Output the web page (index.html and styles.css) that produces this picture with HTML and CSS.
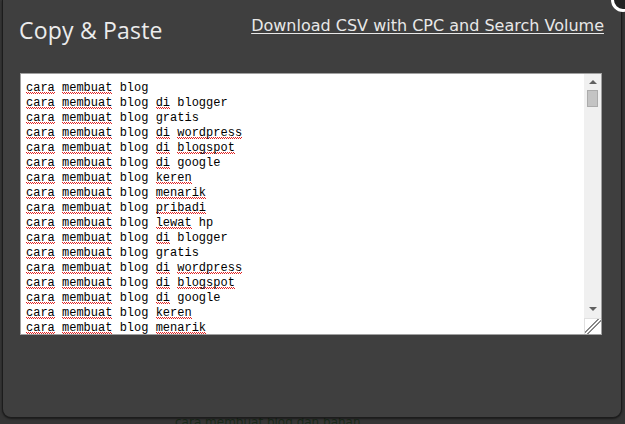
FILE: index.html
```html
<!DOCTYPE html>
<html lang="id">
<head>
    <meta charset="UTF-8">
    <title>Copy &amp; Paste</title>
    <link rel="stylesheet" href="styles.css">
</head>
<body>

    <div class="modal">
        <a class="btn-close" href="#"></a>
        <div class="modal-head">
            <h2>Copy &amp; Paste</h2>
            <a class="csv-link" href="#">Download CSV with CPC and Search Volume</a>
        </div>

        <div class="keyword-box">
            <div class="keyword-lines">
                <div><u>cara</u> <u>membuat</u> blog</div>
                <div><u>cara</u> <u>membuat</u> blog <u>di</u> blogger</div>
                <div><u>cara</u> <u>membuat</u> blog gratis</div>
                <div><u>cara</u> <u>membuat</u> blog <u>di</u> <u>wordpress</u></div>
                <div><u>cara</u> <u>membuat</u> blog <u>di</u> <u>blogspot</u></div>
                <div><u>cara</u> <u>membuat</u> blog <u>di</u> google</div>
                <div><u>cara</u> <u>membuat</u> blog <u>keren</u></div>
                <div><u>cara</u> <u>membuat</u> blog <u>menarik</u></div>
                <div><u>cara</u> <u>membuat</u> blog <u>pribadi</u></div>
                <div><u>cara</u> <u>membuat</u> blog <u>lewat</u> hp</div>
                <div><u>cara</u> <u>membuat</u> blog <u>di</u> blogger</div>
                <div><u>cara</u> <u>membuat</u> blog gratis</div>
                <div><u>cara</u> <u>membuat</u> blog <u>di</u> <u>wordpress</u></div>
                <div><u>cara</u> <u>membuat</u> blog <u>di</u> <u>blogspot</u></div>
                <div><u>cara</u> <u>membuat</u> blog <u>di</u> google</div>
                <div><u>cara</u> <u>membuat</u> blog <u>keren</u></div>
                <div><u>cara</u> <u>membuat</u> blog <u>menarik</u></div>
            </div>
            <div class="scrollbar">
                <span class="arrow-up"></span>
                <span class="thumb"></span>
                <span class="track"></span>
                <span class="arrow-down"></span>
                <span class="grip"></span>
            </div>
        </div>
    </div>

    <p class="behind">cara membuat blog dan bahan</p>

</body>
</html>
```

FILE: styles.css
```css
body {
    margin: 0;
    height: 424px;
    overflow: hidden;
    background-color: #353535;
    font-family: "DejaVu Sans", sans-serif;
}

.modal {
    position: relative;
    width: 618px;
    height: 417px;
    margin: 0 0 0 2px;
    background-color: #3f3f3f;
    border: 1px solid #1c1c1c;
    border-top: none;
    border-radius: 0 0 9px 9px;
    box-shadow: 0 1px 2px rgba(0,0,0,0.5);
}

.btn-close {
    position: absolute;
    top: -12px;
    right: -14px;
    width: 18px;
    height: 18px;
    border: 3px solid #fff;
    border-radius: 50%;
    background-color: #222;
}

.modal-head {
    display: flex;
    justify-content: space-between;
    align-items: flex-start;
    padding: 14px 17px 0 16px;
    height: 59px;
}

.modal-head h2 {
    margin: 0;
    font-family: "Open Sans", sans-serif;
    font-weight: normal;
    font-size: 23px;
    line-height: 32px;
    letter-spacing: 0.2px;
    color: #ececec;
}

.csv-link {
    margin-top: 1px;
    font-family: "DejaVu Sans", sans-serif;
    font-size: 16px;
    line-height: 22px;
    color: #e8e8e8;
    text-decoration: underline;
    text-underline-offset: 2px;
}

.keyword-box {
    display: flex;
    width: 580px;
    height: 260px;
    margin-left: 17px;
    background-color: #fff;
    border: 1px solid #a0a0a0;
    overflow: hidden;
}

.keyword-lines {
    flex: 1;
    padding: 7px 5px;
    font-family: "Liberation Mono", monospace;
    font-size: 12px;
    line-height: 15px;
    color: #000;
    white-space: nowrap;
    overflow: hidden;
}

/* spell-check squiggle */
.keyword-lines u {
    text-decoration: none;
    background-image: linear-gradient(90deg, #e02020 50%, transparent 50%), linear-gradient(90deg, transparent 50%, #e02020 50%);
    background-size: 2px 1px, 2px 1px;
    background-position: 0 calc(100% - 2px), 0 calc(100% - 1px);
    background-repeat: repeat-x;
}

.scrollbar {
    display: flex;
    flex-direction: column;
    align-items: center;
    width: 17px;
    background-color: #f0f0f0;
}

.arrow-up, .arrow-down {
    width: 0;
    height: 0;
    margin: 6px 0 4px;
    border-left: 4px solid transparent;
    border-right: 4px solid transparent;
}

.arrow-up {
    border-bottom: 4px solid #606060;
}

.arrow-down {
    border-top: 4px solid #606060;
}

.thumb {
    width: 11px;
    height: 17px;
    margin-top: 2px;
    background-color: #c4c4c4;
    border: 1px solid #ababab;
    box-sizing: border-box;
}

.track {
    flex: 1;
}

.grip {
    width: 17px;
    height: 16px;
    margin-top: 3px;
    background-color: #fff;
    border-top: 1px solid #e0e0e0;
    border-left: 1px solid #e0e0e0;
    box-sizing: border-box;
    background-image: linear-gradient(135deg, transparent 9px, #888 9px, #888 10px, transparent 10px, transparent 12px, #888 12px, #888 13px, transparent 13px);
}

.behind {
    margin: 0 0 0 175px;
    font-family: "DejaVu Sans", sans-serif;
    font-size: 12px;
    line-height: 8px;
    color: #1a2a1a;
}
```
